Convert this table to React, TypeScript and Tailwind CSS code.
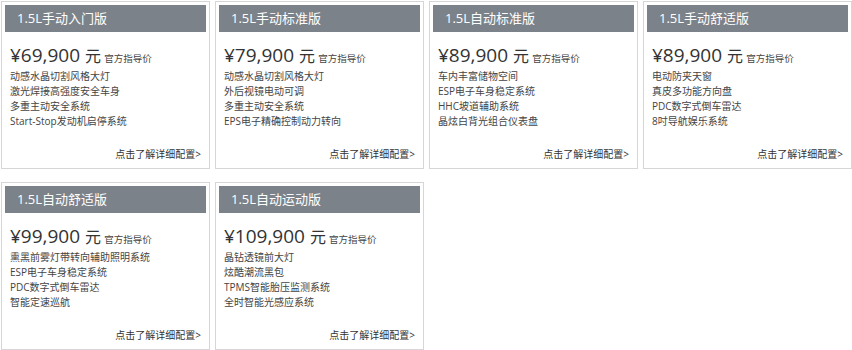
import React from "react";

type Trim = { name: string; price: string; items: string[] };

const trims: Trim[] = [
  { name: "1.5L手动入门版", price: "¥69,900", items: ["动感水晶切割风格大灯", "激光焊接高强度安全车身", "多重主动安全系统", "Start-Stop发动机启停系统"] },
  { name: "1.5L手动标准版", price: "¥79,900", items: ["动感水晶切割风格大灯", "外后视镜电动可调", "多重主动安全系统", "EPS电子精确控制动力转向"] },
  { name: "1.5L自动标准版", price: "¥89,900", items: ["车内丰富储物空间", "ESP电子车身稳定系统", "HHC坡道辅助系统", "晶炫白背光组合仪表盘"] },
  { name: "1.5L手动舒适版", price: "¥89,900", items: ["电动防夹天窗", "真皮多功能方向盘", "PDC数字式倒车雷达", "8吋导航娱乐系统"] },
  { name: "1.5L自动舒适版", price: "¥99,900", items: ["熏黑前雾灯带转向辅助照明系统", "ESP电子车身稳定系统", "PDC数字式倒车雷达", "智能定速巡航"] },
  { name: "1.5L自动运动版", price: "¥109,900", items: ["晶钻透镜前大灯", "炫酷潮流黑包", "TPMS智能胎压监测系统", "全时智能光感应系统"] },
];

function Card({ t }: { t: Trim }) {
  return (
    <div className="w-[209px] h-[168px] border border-[#d6d6d6] bg-white p-[3px] flex flex-col">
      <div className="h-[27px] bg-[#7c8289] text-white text-[13px] leading-[27px] pl-[12px]">{t.name}</div>
      <div className="mt-[11px] h-[24px] leading-[24px] pl-[5px] text-[#333] flex items-baseline">
        <span className="text-[19px]">{t.price}</span>
        <span className="text-[16px] ml-[5px]">元</span>
        <span className="text-[9.5px] ml-[3px] text-[#444]">官方指导价</span>
      </div>
      <div className="mt-[2px] pl-[5px] text-[10px] leading-[15px] text-[#444]">
        {t.items.map((s) => (
          <div key={s}>{s}</div>
        ))}
      </div>
      <div className="mt-auto pb-[3px] pr-[5px] text-right text-[10px] leading-[15px] text-[#333]">点击了解详细配置&gt;</div>
    </div>
  );
}

export default function App() {
  return (
    <div
      className="w-[852px] h-[350px] bg-white pl-[1px] pt-[1px] flex flex-wrap content-start gap-x-[5px] gap-y-[13px]"
      style={{ fontFamily: '"Open Sans", "Noto Sans CJK SC", sans-serif' }}
    >
      {trims.map((t) => (
        <Card key={t.name} t={t} />
      ))}
    </div>
  );
}
